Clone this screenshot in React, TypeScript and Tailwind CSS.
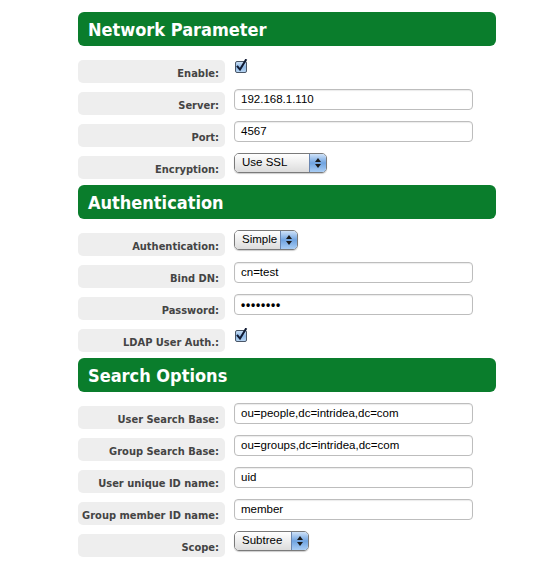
import React from 'react';

type Field =
  | { label: string; kind: 'check' }
  | { label: string; kind: 'text'; value: string; password?: boolean }
  | { label: string; kind: 'select'; value: string; width: string };

interface Section {
  title: string;
  fields: Field[];
}

const sections: Section[] = [
  {
    title: 'Network Parameter',
    fields: [
      { label: 'Enable:', kind: 'check' },
      { label: 'Server:', kind: 'text', value: '192.168.1.110' },
      { label: 'Port:', kind: 'text', value: '4567' },
      { label: 'Encryption:', kind: 'select', value: 'Use SSL', width: 'w-[93px]' },
    ],
  },
  {
    title: 'Authentication',
    fields: [
      { label: 'Authentication:', kind: 'select', value: 'Simple', width: 'w-[64px]' },
      { label: 'Bind DN:', kind: 'text', value: 'cn=test' },
      { label: 'Password:', kind: 'text', value: '••••••••', password: true },
      { label: 'LDAP User Auth.:', kind: 'check' },
    ],
  },
  {
    title: 'Search Options',
    fields: [
      { label: 'User Search Base:', kind: 'text', value: 'ou=people,dc=intridea,dc=com' },
      { label: 'Group Search Base:', kind: 'text', value: 'ou=groups,dc=intridea,dc=com' },
      { label: 'User unique ID name:', kind: 'text', value: 'uid' },
      { label: 'Group member ID name:', kind: 'text', value: 'member' },
      { label: 'Scope:', kind: 'select', value: 'Subtree', width: 'w-[75px]' },
    ],
  },
];

const CheckBox = () => (
  <svg width="13" height="14" viewBox="0 0 13 14" className="block">
    <defs>
      <linearGradient id="cb" x1="0" y1="0" x2="0" y2="1">
        <stop offset="0" stopColor="#cfe3f7" />
        <stop offset="0.5" stopColor="#8fb9e6" />
        <stop offset="1" stopColor="#b9d6f3" />
      </linearGradient>
    </defs>
    <rect x="0.5" y="2.5" width="11" height="11" rx="1.5" fill="url(#cb)" stroke="#4a5666" />
    <path d="M2.6 7.6 L5 10.6 L10.8 1" fill="none" stroke="#0f1a33" strokeWidth="2" strokeLinecap="square" />
  </svg>
);

// aqua-like popup button
const SelectBox = ({ value, width }: { value: string; width: string }) => (
  <div
    className={`${width} h-[20px] flex items-stretch rounded-[5px] border border-[#7a7a7a] overflow-hidden shadow-[0_1px_1px_rgba(0,0,0,0.2)]`}
  >
    <div className="flex-1 flex items-center pl-[7px] text-[11.5px] text-black bg-gradient-to-b from-[#ffffff] via-[#eeeeee] to-[#dcdcdc] font-['Liberation_Sans',_Arial,_sans-serif] whitespace-nowrap">
      {value}
    </div>
    <div className="w-[17px] shrink-0 flex flex-col items-center justify-center gap-[2px] border-l border-[#6a86b0] bg-gradient-to-b from-[#cfe2f8] via-[#6fa3e0] to-[#a9cdf4]">
      <div className="w-0 h-0 border-l-[3px] border-r-[3px] border-b-[4px] border-l-transparent border-r-transparent border-b-[#1a1a1a]" />
      <div className="w-0 h-0 border-l-[3px] border-r-[3px] border-t-[4px] border-l-transparent border-r-transparent border-t-[#1a1a1a]" />
    </div>
  </div>
);

const Row = ({ field }: { field: Field }) => (
  <div className="flex items-start h-[23px]">
    <div className="w-[147px] h-[23px] rounded-[5px] bg-[#eeeeee] flex items-end justify-end pr-[6px] pb-[4px] text-[11px] font-bold text-[#444444] leading-none whitespace-nowrap font-['DejaVu_Sans_Condensed',_'Liberation_Sans',_sans-serif]">
      {field.label}
    </div>
    <div className="ml-[9px] -mt-[3px]">
      {field.kind === 'check' && (
        <div className="pt-[2px] pl-[1px]">
          <CheckBox />
        </div>
      )}
      {field.kind === 'text' && (
        <div
          className={`w-[239px] h-[21px] rounded-[4px] border border-[#bdbdbd] bg-white flex items-center pl-[6px] text-black shadow-[inset_0_1px_1px_rgba(0,0,0,0.08)] font-['Liberation_Sans',_Arial,_sans-serif] ${
            field.password ? 'text-[12px] tracking-[0.8px] font-bold' : 'text-[11.5px]'
          }`}
        >
          {field.value}
        </div>
      )}
      {field.kind === 'select' && <SelectBox value={field.value} width={field.width} />}
    </div>
  </div>
);

export default function App() {
  return (
    <div className="w-[546px] h-[563px] bg-white pt-[12px] pl-[78px] font-['DejaVu_Sans',_Verdana,_sans-serif]">
      <div className="w-[418px]">
        {sections.map((s, i) => (
          <div key={s.title} className={i > 0 ? 'mt-[6px]' : ''}>
            <div className="h-[34px] rounded-[6px] bg-[#0a7d2c] flex items-center pl-[10px] text-white font-bold text-[18px] font-['DejaVu_Sans_Condensed',_'DejaVu_Sans',_sans-serif]">
              {s.title}
            </div>
            <div className="pt-[14px] flex flex-col gap-[9px]">
              {s.fields.map((f) => (
                <Row key={f.label} field={f} />
              ))}
            </div>
          </div>
        ))}
      </div>
    </div>
  );
}
